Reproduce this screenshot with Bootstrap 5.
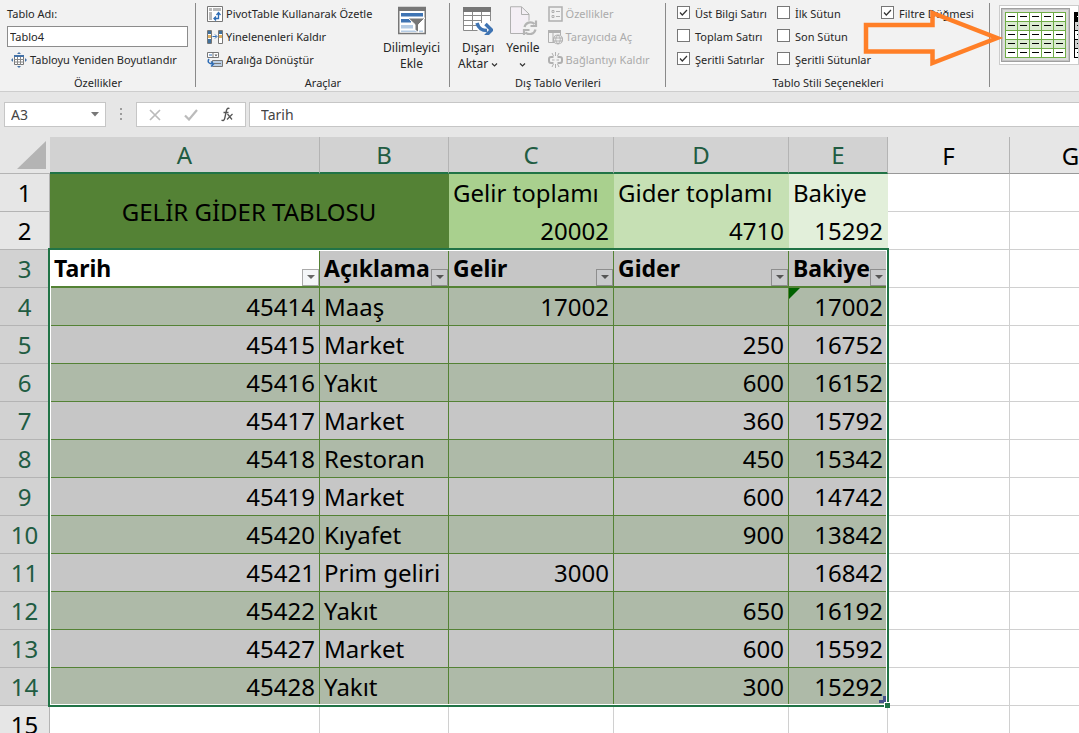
<!DOCTYPE html>
<html lang="tr">
<head>
<meta charset="utf-8">
<meta name="viewport" content="width=device-width, initial-scale=1">
<title>Gelir Gider Tablosu</title>
<link href="https://cdn.jsdelivr.net/npm/bootstrap@5.3.0/dist/css/bootstrap.min.css" rel="stylesheet">
<style>
:root { --xl-green: #217346; --tbl-green: #548235; }
body { font-family: "Noto Sans", "Open Sans", sans-serif; font-size: 11px; line-height: 16px; color: #262626; background: #e6e6e6; }
svg { display: block; flex: none; }
.ribbon { background: #f2f2f2; border-bottom: 1px solid #cdcdcd; height: 92px; }
.rgroup { display: flex; flex-direction: column; padding-top: 2px; position: relative; flex: none; }
.rgroup::after { content: ""; position: absolute; right: 0; top: 3px; bottom: 4px; width: 1px; background: #8a8a8a; }
.rbody { height: 71px; }
.rtitle { text-align: center; height: 18px; line-height: 20px; }
.g-props { width: 196px; } .g-tools { width: 254px; } .g-data { width: 216px; } .g-opts { width: 324px; }
.g-props .rbody { padding-left: 7px; } .g-tools .rbody { padding: 0 10px 0 11px; }
.cmd { display: flex; align-items: center; gap: 3px; height: 23px; padding: 0; border: 0; background: none; color: inherit; white-space: nowrap; }
.cmd:disabled { color: #ababab; }
.bigcmd { display: flex; flex-direction: column; align-items: center; border: 0; padding: 4px 0 0; background: none; color: inherit; font-size: 12px; }
.bigcmd > svg { margin-bottom: 5px; }
.name-field { width: 181px; height: 21px; margin: 1px 0; border: 1px solid #8c8c8c; padding: 0 2px; background: #fff; color: #262626; }
.opts { display: grid; grid-template-columns: 100px 104px auto; grid-auto-rows: 23px; padding-left: 11px; }
.opt { display: flex; align-items: center; gap: 5px; white-space: nowrap; }
.opt input { appearance: none; width: 13px; height: 13px; margin: 0; border: 1px solid #777; background: #fff; flex: none; margin-bottom: 3px; }
.opt input:checked { background: #fff url("data:image/svg+xml,%3Csvg xmlns='http://www.w3.org/2000/svg' viewBox='0 0 11 11'%3E%3Cpath d='M2 5.5 4.3 8 9 3' fill='none' stroke='%23333' stroke-width='1.2'/%3E%3C/svg%3E"); }
.gallery { margin: 5px 0 0 9px; height: 60px; background: #fff; border: 1px solid #ccc; overflow: hidden; padding: 2px 0 0 1px; gap: 4px; }
.pick { width: 69px; height: 54px; border: 1px solid #a0a0a0; background: #dcdcdc; padding: 3px; flex: none; outline: 1px solid #c4c4c4; outline-offset: -2px; }
.pick2 { border: 0; padding: 4px 0 0; background: none; flex: none; align-self: flex-start; }
.arrow { position: absolute; left: 863px; top: 8px; z-index: 3; pointer-events: none; }
.fbar { padding-top: 10px; height: 45px; font-size: 14px; color: #444; }
.fbox { height: 25px; background: #fff; border: 1px solid #c6c6c6; }
.fbox input { border: 0; outline: 0; padding: 0; background: none; color: inherit; min-width: 0; }
.nbox { width: 102px; margin-left: 4px; padding: 0 6px; }
.nbox button, .fbtns button { border: 0; background: none; padding: 0; }
.dots { margin: 0 14px; }
.fbtns { width: 110px; padding: 0 12px; }
.fline { margin-left: 3px; padding-left: 11px; }
.sheet { position: relative; }
.cells { table-layout: fixed; border-collapse: separate; border-spacing: 0; width: 1132px; font-size: 24px; line-height: 34px; color: #000; }
.cells th, .cells td { padding: 0 4px; white-space: nowrap; height: 38px; border-right: 1px solid #d0d0d0; border-bottom: 1px solid #d0d0d0; background: #fff; font-weight: 400; overflow: hidden; }
.cells thead th { height: 37px; text-align: center; background: #e6e6e6; border-right-color: #b4b4b4; border-bottom-color: #999; padding-top: 1px; }
.cells thead .sel { background: #d2d2d2; color: #215c42; border-bottom: 2px solid var(--xl-green); }
.cells thead .corner { border: 0; border-bottom: 1px solid #b4b4b4; padding: 0 4px 0 0; vertical-align: bottom; }
.cells tbody th { background: #e6e6e6; text-align: center; border-color: #b4b4b4; padding: 0; }
.cells tbody tr.sel th { background: #d2d2d2; color: #215c42; }
.cells .num { text-align: right; }
.cells .merged { background: var(--tbl-green); text-align: center; border-color: var(--tbl-green); }
.cells .t1 { background: #a9d08e; border-color: #a9d08e; }
.cells .t2 { background: #c6e0b4; border-color: #c6e0b4; }
.cells .t3 { background: #e2efda; border-color: #e2efda; }
.cells .hd { font-size: 23px; font-weight: 700; background: #c6c6c6; border-right-color: var(--tbl-green); border-bottom: 2px solid var(--tbl-green); position: relative; }
.cells .hd.active { background: #fff; }
.cells .d { background: #c6c6c6; border-color: var(--tbl-green); position: relative; }
.cells .band .d { background: #aebaa8; }
.flag::before { content: ""; position: absolute; left: 0; top: 0; border: solid transparent; border-width: 0 11px 11px 0; border-top: 0; border-left: 11px solid #006100; border-right: 0; }
.filt { position: absolute; right: 0; bottom: 0; width: 17px; height: 17px; border: 1px solid #8e8e8e; background: #c9cacc; padding: 0; display: flex; align-items: center; justify-content: center; }
.active .filt { background: #f4f6f8; border-color: #aaa; }
.selbox { position: absolute; left: 48px; top: 111px; width: 841px; height: 459px; border: 2px solid var(--xl-green); box-shadow: inset 0 0 0 1px #fff; pointer-events: none; }
.selbox::after { content: ""; position: absolute; right: -3px; bottom: -3px; width: 6px; height: 6px; background: var(--xl-green); border: solid #fff; border-width: 1px 0 0 1px; }
.selbox svg { position: absolute; right: 1px; bottom: 2px; }
</style>
</head>
<body class="vh-100 overflow-hidden d-flex flex-column">
<header class="ribbon d-flex position-relative flex-shrink-0 overflow-hidden">
  <section class="rgroup g-props">
    <div class="rbody">
      <label class="cmd" for="tname">Tablo Adı:</label>
      <input id="tname" class="name-field d-block" value="Tablo4">
      <button class="cmd ps-1"><svg width="16" height="16" viewBox="0 0 16 16"><path d="M3.500 3.500h9v9h-9z" fill="#fff" stroke="#777"/><path d="M3 3h10v2H3z" fill="#4472a8"/><path d="M3 7.500h10M3 10h10M6.500 5v8M9.500 5v8" stroke="#888" fill="none"/><path d="M6 2 8 0l2 2zM6 14l2 2 2-2zM2 6 0 8l2 2zM14 6l2 2-2 2z" fill="#4472a8"/></svg>Tabloyu Yeniden Boyutlandır</button>
    </div>
    <div class="rtitle">Özellikler</div>
  </section>

  <section class="rgroup g-tools">
    <div class="rbody d-flex">
      <div>
        <button class="cmd"><svg width="16" height="16" viewBox="0 0 16 16"><path d="M.5.5h15v15H.5z" fill="#fff" stroke="#777"/><path d="M2 2h3v3H2zM6 2h8v3H6zM2 6h3v8H2z" fill="#b9b9b9"/><path d="M7 12.500h4.500V7M9.500 9l2-2.500 2 2.500M9 10.500l-2 2 2 2" fill="none" stroke="#2f6db5" stroke-width="1.300"/></svg>PivotTable Kullanarak Özetle</button>
        <button class="cmd"><svg width="16" height="16" viewBox="0 0 16 16"><path d="M.5 1.500h4v13h-4zM11.500 1.500h4v13h-4z" fill="#fff" stroke="#777"/><path d="M1 2h3v3H1zM1 10h3v4H1zM12 2h3v3h-3z" fill="#41719c"/><path d="M1 6h3v3H1zM12 6h3v3h-3z" fill="#e0b060"/><path d="M5.500 7.500h4M8 5.500l2 2-2 2" fill="none" stroke="#2f6db5"/></svg>Yinelenenleri Kaldır</button>
        <button class="cmd"><svg width="16" height="16" viewBox="0 0 16 16"><path d="M.5.5h11v5H.5zM6 .5v5" fill="#fff" stroke="#777"/><path d="M2 3h3" stroke="#2f6db5"/><path d="M7.500 2.500h3L9 4.500z" fill="#555"/><path d="M5.500 8.500h10v6h-10z" fill="#bcd0e6" stroke="#777"/><path d="M7 11.500h7" stroke="#777"/><path d="M2 7c-2 3 0 5 4 5M4 9.500 6.500 12 4 14.500" fill="none" stroke="#2f6db5" stroke-width="1.500"/></svg>Aralığa Dönüştür</button>
      </div>
      <button class="bigcmd ms-auto"><svg width="28" height="29" viewBox="0 0 28 29"><path d="M.75 1.500h26.500v26H.75z" fill="#fff" stroke="#777" stroke-width="1.500"/><path d="M0 1h28v4H0z" fill="#777"/><path d="M3 7h22v3.500H3zM3 13h10v3.500H3z" fill="#3f74b3"/><path d="M3 19h12v3.500H3zM3 24.500h22V26H3z" fill="#b4cbe4"/><path d="M10 12h17l-6.500 6.500v8L17 24v-5.500z" fill="#777" stroke="#fff"/></svg><span>Dilimleyici<br>Ekle</span></button>
    </div>
    <div class="rtitle">Araçlar</div>
  </section>

  <section class="rgroup g-data">
    <div class="rbody d-flex">
      <button class="bigcmd ms-2"><svg width="30" height="29" viewBox="0 0 30 29"><path d="M1 2h26v22H1z" fill="#fff"/><path d="M.5 2v22.500h14M27.500 2v13M1 9.500h26M1 14.500h18M1 19.500h13M9.500 5v19M18.500 5v12" fill="none" stroke="#8a8a8a"/><path d="M0 1h28v5H0z" fill="#777"/><path d="M14 17c2 7 6 7.500 10 7.500M22.500 18l6 6-6 6" fill="none" stroke="#3f74b3" stroke-width="3.500"/></svg><span>Dışarı<br>Aktar <svg class="d-inline" width="7" height="6" viewBox="0 0 7 6"><path d="m1 1.500 2.500 2.500L6 1.500" fill="none" stroke="#333" stroke-width="1.200"/></svg></span></button>
      <button class="bigcmd ms-2"><svg width="30" height="29" viewBox="0 0 30 29"><path d="M2.500.75h11L21 8v19.500H2.500z" fill="#f4eff5" stroke="#b0b0b0"/><path d="M13.500 1v7.500H21" fill="none" stroke="#b0b0b0"/><circle cx="22" cy="22" r="7.500" fill="#f2f2f2"/><path d="M16.500 21a6 6 0 0 1 10-3M28 14.500V20h-5.500M27.500 23.500a6 6 0 0 1-10 3M16 29.500V24h5.500" fill="none" stroke="#b4b4b4" stroke-width="2.200"/></svg><span>Yenile<br><svg class="d-inline" width="7" height="6" viewBox="0 0 7 6"><path d="m1 1.500 2.500 2.500L6 1.500" fill="none" stroke="#333" stroke-width="1.200"/></svg></span></button>
      <div class="ms-2">
        <button class="cmd" disabled><svg width="15" height="16" viewBox="0 0 15 16"><path d="M1 1h13v14H1z" fill="none" stroke="#b0b0b0" stroke-width="1.500"/><path d="M4 4.500h2v2H4zM4 9.500h2v2H4z" fill="none" stroke="#b0b0b0"/><path d="M8 5.500h4M8 10.500h4" stroke="#b0b0b0"/></svg>Özellikler</button>
        <button class="cmd" disabled><svg width="15" height="16" viewBox="0 0 15 16"><path d="M.5 1.500h12V6M.5 1v12.500H6M5 4v9" fill="none" stroke="#b0b0b0"/><path d="M0 1h13v3H0z" fill="#b0b0b0"/><circle cx="10" cy="10.500" r="4.500" fill="#f2f2f2" stroke="#b0b0b0" stroke-width="1.200"/><path d="M5.500 9h9M5.500 12h9M10 6c-3 3-3 6 0 9M10 6c3 3 3 6 0 9" fill="none" stroke="#b0b0b0"/></svg>Tarayıcıda Aç</button>
        <button class="cmd" disabled><svg width="15" height="16" viewBox="0 0 15 16"><path d="M5.500 5H3a2 2 0 0 0-2 2v2a2 2 0 0 0 2 2h2.500M9.500 5H12a2 2 0 0 1 2 2v2a2 2 0 0 1-2 2H9.500" fill="none" stroke="#b0b0b0" stroke-width="2"/><path d="M7.500 0v4M4 1l1.500 3M11 1 9.500 4M7.500 12v4M4 15l1.500-3M11 15l-1.500-3M4 8h2.500M8.500 8H11" stroke="#b0b0b0"/></svg>Bağlantıyı Kaldır</button>
      </div>
    </div>
    <div class="rtitle">Dış Tablo Verileri</div>
  </section>

  <section class="rgroup g-opts">
    <div class="rbody"><div class="opts">
      <label class="opt"><input type="checkbox" checked>Üst Bilgi Satırı</label>
      <label class="opt"><input type="checkbox">İlk Sütun</label>
      <label class="opt"><input type="checkbox" checked>Filtre Düğmesi</label>
      <label class="opt"><input type="checkbox">Toplam Satırı</label>
      <label class="opt"><input type="checkbox">Son Sütun</label>
      <span></span>
      <label class="opt"><input type="checkbox" checked>Şeritli Satırlar</label>
      <label class="opt"><input type="checkbox">Şeritli Sütunlar</label>
    </div></div>
    <div class="rtitle">Tablo Stili Seçenekleri</div>
  </section>

  <div class="gallery d-flex flex-grow-1">
    <button class="pick" aria-label="Yeşil tablo stili"><svg width="61" height="46" viewBox="0 0 61 46"><path d="M0 0h61v46H0z" fill="#fff"/><path d="M0 9h61v9H0zM0 27h61v9H0z" fill="#dcecd2"/><path d="M0 .5h61M0 9.500h61M0 18.500h61M0 27.500h61M0 36.500h61M0 45.500h61M.5 0v46M12.500 0v46M24.500 0v46M36.500 0v46M48.500 0v46M60.500 0v46" stroke="#70ad47"/><path d="M3 4.500h55M3 13.500h55M3 22.500h55M3 31.500h55M3 40.500h55" stroke="#000" stroke-dasharray="7 5"/></svg></button>
    <button class="pick2" aria-label="Siyah tablo stili"><svg width="61" height="46" viewBox="0 0 61 46"><path d="M0 0h61v46H0z" fill="#fff"/><path d="M0 9h61v9H0zM0 27h61v9H0z" fill="#d0d0d0"/><path d="M0 0h61v9H0z"/><path d="M0 9.500h61M0 18.500h61M0 27.500h61M0 36.500h61M0 45.500h61M.5 0v46M12.500 0v46M24.500 0v46M36.500 0v46M48.500 0v46M60.500 0v46" stroke="#000"/><path d="M3 4.500h55" stroke="#fff" stroke-dasharray="7 5"/><path d="M3 13.500h55M3 22.500h55M3 31.500h55M3 40.500h55" stroke="#000" stroke-dasharray="7 5"/></svg></button>
  </div>
  <svg class="arrow" width="142" height="60" viewBox="0 0 142 60"><path d="M3 17h66.500V5L134 30 69.500 55V43.500H3z" fill="none" stroke="#ff7f27" stroke-width="4.500"/></svg>
</header>

<div class="fbar d-flex flex-shrink-0">
  <div class="fbox nbox d-flex align-items-center"><input class="flex-grow-1" aria-label="Ad kutusu" value="A3"><button aria-label="Ad listesi"><svg width="8" height="5" viewBox="0 0 8 5"><path d="M0 0h8L4 4.500z" fill="#777"/></svg></button></div>
  <svg class="dots" width="2" height="25" viewBox="0 0 2 25" fill="#9c9c9c"><path d="M0 6h2v2H0zM0 11h2v2H0zM0 16h2v2H0z"/></svg>
  <div class="fbox fbtns d-flex align-items-center justify-content-between">
    <button aria-label="İptal"><svg width="12" height="12" viewBox="0 0 12 12"><path d="m1 1 10 10M11 1 1 11" stroke="#bbb" stroke-width="1.700"/></svg></button>
    <button aria-label="Gir"><svg width="14" height="12" viewBox="0 0 14 12"><path d="m1 6.500 4 4L13 1" fill="none" stroke="#bbb" stroke-width="2.200"/></svg></button>
    <button aria-label="İşlev ekle"><svg width="12" height="15" viewBox="0 0 12 15"><path d="M8.500 1.500C6 .5 5.500 3 5 5.500L3.800 11C3.300 13.500 2 14 .5 13M2.500 5.500h5" fill="none" stroke="#555" stroke-width="1.300"/><path d="m6.500 7 4.500 5.500M11.500 7 6 12.500" stroke="#555" stroke-width="1.200"/></svg></button>
  </div>
  <div class="fbox fline flex-grow-1 d-flex border-end-0"><input class="w-100" aria-label="Formül çubuğu" value="Tarih"></div>
</div>

<main class="sheet flex-grow-1 overflow-hidden bg-white">
  <table class="cells">
    <colgroup><col style="width:50px"><col style="width:270px"><col style="width:129px"><col style="width:165px"><col style="width:175px"><col style="width:99px"><col style="width:122px"><col style="width:122px"></colgroup>
    <thead><tr><th class="corner"><svg class="ms-auto mb-1" width="29" height="28" viewBox="0 0 29 28"><path d="M29 0v28H0z" fill="#b4b4b4"/></svg></th><th class="sel">A</th><th class="sel">B</th><th class="sel">C</th><th class="sel">D</th><th class="sel">E</th><th>F</th><th>G</th></tr></thead>
    <tbody>
      <tr><th>1</th><td class="merged" colspan="2" rowspan="2">GELİR GİDER TABLOSU</td><td class="t1">Gelir toplamı</td><td class="t2">Gider toplamı</td><td class="t3">Bakiye</td><td></td><td></td></tr>
      <tr><th>2</th><td class="t1 num">20002</td><td class="t2 num">4710</td><td class="t3 num">15292</td><td></td><td></td></tr>
      <tr class="sel"><th>3</th><td class="hd active">Tarih<button class="filt" aria-label="Tarih filtresi"><svg width="8" height="5"><path d="M0 0h8L4 4z" fill="#666"/></svg></button></td><td class="hd">Açıklama<button class="filt" aria-label="Açıklama filtresi"><svg width="8" height="5"><path d="M0 0h8L4 4z" fill="#555"/></svg></button></td><td class="hd">Gelir<button class="filt" aria-label="Gelir filtresi"><svg width="8" height="5"><path d="M0 0h8L4 4z" fill="#555"/></svg></button></td><td class="hd">Gider<button class="filt" aria-label="Gider filtresi"><svg width="8" height="5"><path d="M0 0h8L4 4z" fill="#555"/></svg></button></td><td class="hd">Bakiye<button class="filt" aria-label="Bakiye filtresi"><svg width="8" height="5"><path d="M0 0h8L4 4z" fill="#555"/></svg></button></td><td></td><td></td></tr>
      <tr class="sel band"><th>4</th><td class="d num">45414</td><td class="d">Maaş</td><td class="d num">17002</td><td class="d num"></td><td class="d num flag">17002</td><td></td><td></td></tr>
      <tr class="sel"><th>5</th><td class="d num">45415</td><td class="d">Market</td><td class="d num"></td><td class="d num">250</td><td class="d num">16752</td><td></td><td></td></tr>
      <tr class="sel band"><th>6</th><td class="d num">45416</td><td class="d">Yakıt</td><td class="d num"></td><td class="d num">600</td><td class="d num">16152</td><td></td><td></td></tr>
      <tr class="sel"><th>7</th><td class="d num">45417</td><td class="d">Market</td><td class="d num"></td><td class="d num">360</td><td class="d num">15792</td><td></td><td></td></tr>
      <tr class="sel band"><th>8</th><td class="d num">45418</td><td class="d">Restoran</td><td class="d num"></td><td class="d num">450</td><td class="d num">15342</td><td></td><td></td></tr>
      <tr class="sel"><th>9</th><td class="d num">45419</td><td class="d">Market</td><td class="d num"></td><td class="d num">600</td><td class="d num">14742</td><td></td><td></td></tr>
      <tr class="sel band"><th>10</th><td class="d num">45420</td><td class="d">Kıyafet</td><td class="d num"></td><td class="d num">900</td><td class="d num">13842</td><td></td><td></td></tr>
      <tr class="sel"><th>11</th><td class="d num">45421</td><td class="d">Prim geliri</td><td class="d num">3000</td><td class="d num"></td><td class="d num">16842</td><td></td><td></td></tr>
      <tr class="sel band"><th>12</th><td class="d num">45422</td><td class="d">Yakıt</td><td class="d num"></td><td class="d num">650</td><td class="d num">16192</td><td></td><td></td></tr>
      <tr class="sel"><th>13</th><td class="d num">45427</td><td class="d">Market</td><td class="d num"></td><td class="d num">600</td><td class="d num">15592</td><td></td><td></td></tr>
      <tr class="sel band"><th>14</th><td class="d num">45428</td><td class="d">Yakıt</td><td class="d num"></td><td class="d num">300</td><td class="d num">15292</td><td></td><td></td></tr>
      <tr><th>15</th><td></td><td></td><td></td><td></td><td></td><td></td><td></td></tr>
    </tbody>
  </table>
  <div class="selbox"><svg width="7" height="7" viewBox="0 0 7 7"><path d="M4 0h3v7H0V4h4z" fill="#44518a"/></svg></div>
</main>
<script src="https://cdn.jsdelivr.net/npm/bootstrap@5.3.0/dist/js/bootstrap.bundle.min.js"></script>
</body>
</html>
